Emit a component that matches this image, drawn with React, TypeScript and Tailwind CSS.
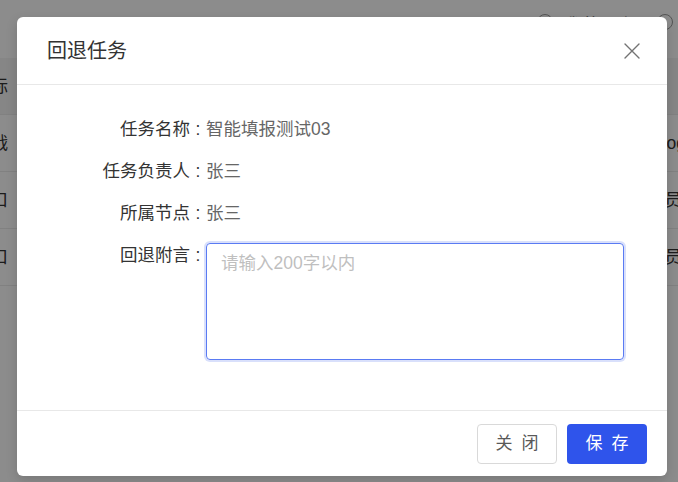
import { useState } from 'react';

const rows = [
  { left: '指标', right: '', head: true, rightClass: 'ml-[640px]' },
  { left: '挑战', right: 'Blog', rightClass: 'ml-[643px]' },
  { left: '接口', right: '人员', rightClass: 'ml-[639px]' },
  { left: '接口', right: '人员', rightClass: 'ml-[639px]' },
];

const fields = [
  { label: '任务名称', value: '智能填报测试03' },
  { label: '任务负责人', value: '张三' },
  { label: '所属节点', value: '张三' },
];

const FieldLabel = ({ text }: { text: string }) => (
  <div className="w-[189px] shrink-0 flex justify-end text-[#333] whitespace-nowrap">
    <span>{text}</span>
    <span className="w-[16px] text-center">:</span>
  </div>
);

const CloseIcon = () => (
  <svg width="16" height="16" viewBox="0 0 16 16" fill="none">
    <path d="M1 1L15 15M15 1L1 15" stroke="#737373" strokeWidth="1.4" strokeLinecap="round" />
  </svg>
);

const App = () => {
  const [remark, setRemark] = useState('');

  return (
    <div
      className="relative w-[678px] h-[482px] overflow-hidden bg-white text-[17.5px] leading-[24px]"
      style={{ fontFamily: '"Liberation Sans", "Noto Sans CJK SC", sans-serif' }}
    >
      {/* 底层页面 */}
      <div className="flex flex-col">
        <div className="h-[58px] flex items-start pt-[13px] pl-[537px] gap-[10px] text-[#333]">
          <span className="w-[16px] h-[16px] rounded-full border border-[#999] mt-[1px]"></span>
          <span className="tracking-[2px]">我的下级</span>
          <span className="ml-[6px] w-[16px] h-[16px] rounded-full border border-[#999] mt-[1px]"></span>
        </div>
        {rows.map((row, i) => (
          <div
            key={i}
            className={`h-[57px] flex items-center border-b border-[#ececec] text-[#333] ${row.head ? 'bg-[#f5f5f5]' : ''}`}
          >
            <div className="w-[8px] shrink-0 flex justify-end overflow-hidden whitespace-nowrap">{row.left}</div>
            <div className={`${row.rightClass} shrink-0 whitespace-nowrap`}>{row.right}</div>
          </div>
        ))}
      </div>

      {/* 弹窗遮罩 */}
      <div className="absolute inset-0 bg-black/45 flex items-start pt-[17px] pl-[17px]">
        <div className="w-[650px] h-[459px] bg-white rounded-[6px] flex flex-col shadow-[0_4px_12px_rgba(0,0,0,0.15)]">
          <div className="h-[68px] shrink-0 flex items-center justify-between pl-[30px] pr-[27px] border-b border-[#e8e8e8]">
            <span className="text-[20px] text-[#333]">回退任务</span>
            <CloseIcon />
          </div>

          <div className="flex-1 flex flex-col gap-[18px] pt-[32px] pr-[43px]">
            {fields.map((f) => (
              <div key={f.label} className="flex h-[24px]">
                <FieldLabel text={f.label} />
                <span className="text-[#666] whitespace-nowrap">{f.value}</span>
              </div>
            ))}
            <div className="flex">
              <FieldLabel text="回退附言" />
              <textarea
                value={remark}
                onChange={(e) => setRemark(e.target.value)}
                placeholder="请输入200字以内"
                className="flex-1 h-[117px] resize-none rounded-[4px] border border-[#5a7bf3] px-[14px] py-[7px] outline-none text-[#333] placeholder:text-[#bfbfbf] shadow-[0_0_0_2px_rgba(47,84,235,0.18)]"
              />
            </div>
          </div>

          <div className="h-[66px] shrink-0 flex items-center justify-end gap-[10px] pr-[20px] border-t border-[#e8e8e8]">
            <button className="w-[80px] h-[40px] rounded-[4px] border border-[#d9d9d9] bg-white text-[#595959] text-[17px] tracking-[9px] pl-[9px]">
              关闭
            </button>
            <button className="w-[80px] h-[40px] rounded-[4px] bg-[#2f54eb] text-white text-[17px] tracking-[9px] pl-[9px]">
              保存
            </button>
          </div>
        </div>
      </div>
    </div>
  );
};

export default App;
